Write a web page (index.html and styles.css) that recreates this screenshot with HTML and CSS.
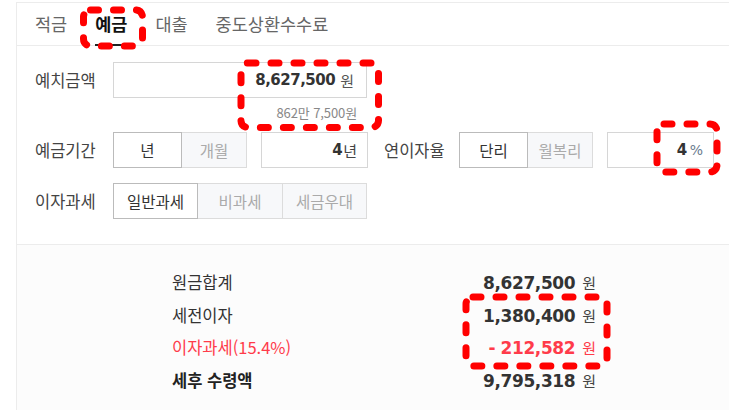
FILE: index.html
```html
<!DOCTYPE html>
<html lang="ko">
<head>
<meta charset="utf-8">
<link rel="stylesheet" href="styles.css">
</head>
<body>
<div class="wrap">
  <ul class="tabs">
    <li class="tab">적금</li>
    <li class="tab active">예금</li>
    <li class="tab">대출</li>
    <li class="tab">중도상환수수료</li>
  </ul>
  <div class="form">
    <div class="row">
      <span class="label">예치금액</span>
      <div class="amount-col">
        <div class="input wide"><b class="num">8,627,500</b><span class="unit">원</span></div>
        <div class="sub">862만 7,500원</div>
      </div>
    </div>
    <div class="row r2">
      <span class="label">예금기간</span>
      <div class="seg">
        <span class="btn on w68">년</span>
        <span class="btn w65">개월</span>
      </div>
      <div class="input small"><b class="num">4</b><span class="unit tight">년</span></div>
      <span class="label label2">연이자율</span>
      <div class="seg">
        <span class="btn on w68">단리</span>
        <span class="btn w65">월복리</span>
      </div>
      <div class="input small"><b class="num">4</b><span class="unit pct">%</span></div>
    </div>
    <div class="row r3">
      <span class="label">이자과세</span>
      <div class="seg">
        <span class="btn on w84">일반과세</span>
        <span class="btn w85">비과세</span>
        <span class="btn w84">세금우대</span>
      </div>
    </div>
  </div>
  <div class="result">
    <div class="res-grid">
      <span class="rl">원금합계</span><span class="rv"><b>8,627,500</b><i>원</i></span>
      <span class="rl">세전이자</span><span class="rv"><b>1,380,400</b><i>원</i></span>
      <span class="rl red">이자과세(15.4%)</span><span class="rv red"><b>- 212,582</b><i>원</i></span>
      <span class="rl strong">세후 수령액</span><span class="rv"><b>9,795,318</b><i>원</i></span>
    </div>
  </div>
</div>
<svg class="marks" width="729" height="411" viewBox="0 0 729 411">
  <g fill="none" stroke="#ff0000" stroke-width="7" stroke-linecap="round" stroke-dasharray="8 15">
    <rect x="83.5" y="10" width="59" height="36" rx="7"/>
    <rect x="241" y="63" width="137.5" height="64.5" rx="7"/>
    <rect x="657" y="124" width="60" height="48" rx="7"/>
    <rect x="466" y="297" width="141" height="69" rx="7"/>
  </g>
</svg>
</body>
</html>
```

FILE: styles.css
```css
html, body {
  margin: 0;
  padding: 0;
  background: #ffffff;
  overflow: hidden;
}
body {
  width: 729px;
  height: 411px;
  font-family: "Noto Sans CJK KR", "Noto Sans", sans-serif;
  color: #333;
}
.wrap {
  margin: 2px 0 0 16px;
  width: 712px;
  border-top: 1px solid #ececec;
  border-left: 1px solid #ececec;
}
.tabs {
  list-style: none;
  margin: 0;
  padding: 0 0 0 18px;
  height: 42px;
  display: flex;
  gap: 28px;
  border-bottom: 1px solid #ececec;
}
.tab {
  font-size: 17.5px;
  line-height: 42px;
  color: #666;
}
.tab.active {
  color: #111;
  font-weight: bold;
  box-shadow: inset 0 -2px 0 #222;
  height: 43px;
}
.form {
  padding: 16px 0 25px 18px;
  border-bottom: 1px solid #ececec;
}
.row {
  display: flex;
  align-items: flex-start;
}
.r2 { margin-top: 10px; align-items: center; }
.r3 { margin-top: 15px; align-items: center; }
.label {
  width: 78px;
  flex: none;
  font-size: 16.5px;
  line-height: 36px;
  color: #444;
}
.label2 {
  width: 75px;
  margin-left: 16px;
}
.amount-col {
  display: flex;
  flex-direction: column;
  width: 254px;
}
.input {
  box-sizing: border-box;
  height: 36px;
  border: 1px solid #d6d6d6;
  background: #fff;
  display: flex;
  align-items: center;
  justify-content: flex-end;
  padding-right: 12px;
}
.input.wide { width: 254px; }
.input.small { width: 107px; margin-left: 14px; padding-right: 10px; }
.num {
  font-family: "DejaVu Sans", sans-serif;
  font-weight: bold;
  font-size: 15px;
  letter-spacing: -0.5px;
  color: #333;
}
.unit {
  font-size: 15px;
  color: #555;
  margin-left: 5px;
}
.unit.tight { margin-left: 1px; color: #444; }
.unit.pct { font-family: "DejaVu Sans", sans-serif; font-size: 14px; color: #6b7b8f; margin-left: 3px; }
.sub {
  text-align: right;
  padding-right: 10px;
  margin-top: 6px;
  font-size: 13px;
  line-height: 18px;
  letter-spacing: -0.1px;
  color: #888;
}
.seg {
  display: flex;
}
.btn {
  box-sizing: border-box;
  height: 36px;
  border: 1px solid #dcdcdc;
  background: #f7f8fa;
  color: #aaa;
  font-size: 15.5px;
  display: flex;
  align-items: center;
  justify-content: center;
  margin-left: -1px;
}
.btn:first-child { margin-left: 0; }
.btn.on {
  background: #fff;
  border-color: #bbbbbb;
  color: #333;
  position: relative;
  z-index: 1;
}
.w68 { width: 69px; }
.w65 { width: 66px; }
.w84 { width: 85px; }
.w85 { width: 86px; }
.result {
  box-sizing: border-box;
  background: #fcfcfc;
  padding: 21px 0 0 155px;
  height: 165px;
}
.res-grid {
  width: 424px;
  display: grid;
  grid-template-columns: 1fr auto;
  grid-auto-rows: 32.5px;
  align-items: center;
}
.rl {
  font-size: 16.5px;
  color: #333;
}
.rl.strong { font-weight: bold; color: #222; }
.rv {
  text-align: right;
  color: #333;
}
.rv b {
  font-family: "DejaVu Sans", sans-serif;
  font-weight: bold;
  font-size: 17px;
  letter-spacing: -0.4px;
}
.rv i {
  font-style: normal;
  font-size: 15px;
  color: #444;
  margin-left: 7px;
}
.red, .rv.red i { color: #ff3b4a; }
.marks {
  position: absolute;
  left: 0;
  top: 0;
  pointer-events: none;
}
```
